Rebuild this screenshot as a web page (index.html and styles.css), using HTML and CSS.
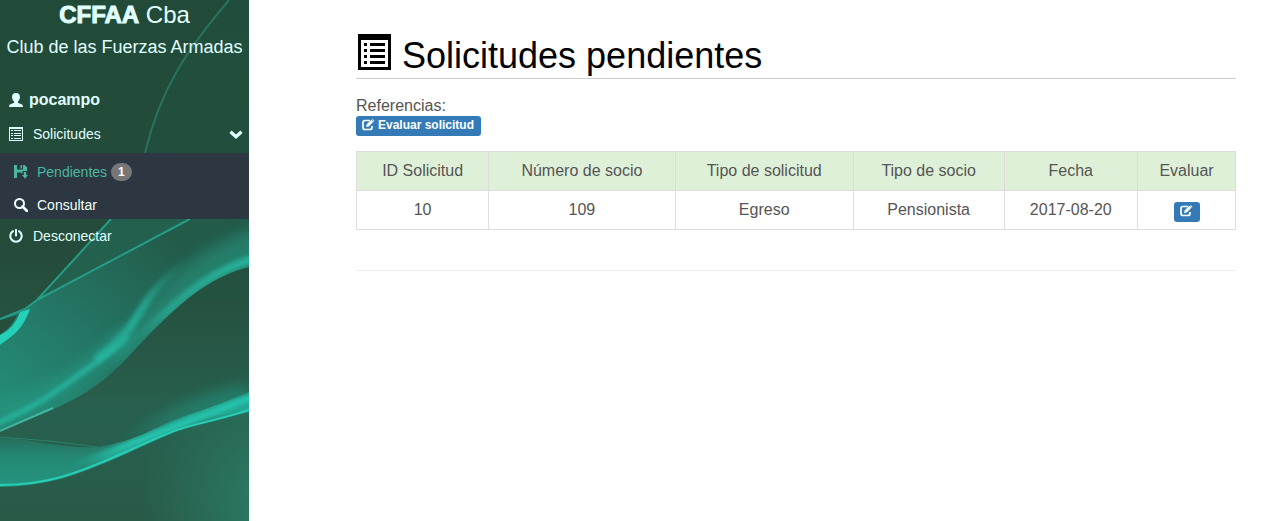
FILE: index.html
```html
<!DOCTYPE html>
<html lang="es">
<head>
<meta charset="utf-8">
<meta name="viewport" content="width=device-width, initial-scale=1">
<title>CFFAA Cba - Solicitudes pendientes</title>
<link rel="stylesheet" href="styles.css">
</head>
<body>
<svg class="symbols" aria-hidden="true">
  <symbol id="list" viewBox="0 0 14 14"><path fill-rule="evenodd" d="M0 0h14v14H0zM1 2v11h12V2z"/><path d="M2 3h2v1H2zM5 3h7v1H5zM2 6h2v1H2zM5 6h7v1H5zM2 8h2v1H2zM5 8h7v1H5zM2 11h2v1H2zM5 11h7v1H5z"/></symbol>
  <symbol id="list-large" viewBox="0 0 33 36"><path fill-rule="evenodd" d="M0 0h33v36H0zM3 6v27h27V6z"/><path d="M6 9h3v3H6zM12 9h15v3H12zM6 15h3v3H6zM12 15h15v3H12zM6 21h3v3H6zM12 21h15v3H12zM6 27h3v3H6zM12 27h15v3H12z"/></symbol>
  <symbol id="user" viewBox="0 0 14 14"><path d="M7 0C4.300 0 3 1.600 3.100 4c.1 2 .8 3.700 2 4.600v1C4.400 10.700 0 11 0 13.400V14h14v-.6c0-2.400-4.400-2.700-5.100-3.800v-1c1.200-.9 1.900-2.600 2-4.600C11 1.600 9.700 0 7 0z"/></symbol>
  <symbol id="save" viewBox="0 0 14 14"><path fill-rule="evenodd" d="M0 0h3v4.500h6V0h1.500L13 2.300V6H8.500v2.500H7.500V7.500H3V13H0zM6.500 0H8v3.500H6.500z"/><path d="M9.800 7h2.400v3H14l-3 3.800L8 10h1.800z"/></symbol>
  <symbol id="search" viewBox="0 0 14 14"><circle cx="5.500" cy="5.500" r="4.500" fill="none" stroke="currentColor" stroke-width="2"/><path d="m8.500 8.500 4.500 4.500" fill="none" stroke="currentColor" stroke-width="2.600" stroke-linecap="round"/></symbol>
  <symbol id="power" viewBox="0 0 14 14"><path d="M4 2.200a5.700 5.700 0 1 0 6 0M7 .8V6.500" fill="none" stroke="currentColor" stroke-width="2" stroke-linecap="round"/></symbol>
  <symbol id="chevron" viewBox="0 0 14 9"><path d="m1.500 1.800 5.500 5 5.500-5" fill="none" stroke="currentColor" stroke-width="3.200"/></symbol>
  <symbol id="edit" viewBox="0 0 13 12"><path d="M8 1.500H3Q1 1.500 1 3.500v5Q1 10.500 3 10.500h5Q10 10.500 10 8.500V7" fill="none" stroke="currentColor" stroke-width="1.700"/><path d="m4 8 .7-2.700L9.500.8l2 2-4.700 4.600zM10 .4l.6-.4 1.900 1.900-.6.500z"/></symbol>
</svg>
<div class="layout">
  <aside class="sidebar">
    <svg class="backdrop" viewBox="0 0 249 521" preserveAspectRatio="xMidYMin slice" aria-hidden="true">
      <defs>
        <linearGradient id="base" x1="0" y1="0" x2="0" y2="1"><stop offset="0" stop-color="#214a38"/><stop offset=".5" stop-color="#254c3a"/><stop offset=".8" stop-color="#28604f"/><stop offset="1" stop-color="#285a48"/></linearGradient>
        <radialGradient id="edge" gradientUnits="userSpaceOnUse" cx="270" cy="500" r="130"><stop offset="0" stop-color="#2a7d66"/><stop offset="1" stop-color="#2a7a63" stop-opacity="0"/></radialGradient>
        <linearGradient id="veil" gradientUnits="userSpaceOnUse" x1="0" y1="400" x2="160" y2="225"><stop offset="0" stop-color="#248c77"/><stop offset=".5" stop-color="#247362"/><stop offset="1" stop-color="#235b4a"/></linearGradient>
        <linearGradient id="wave" gradientUnits="userSpaceOnUse" x1="60" y1="0" x2="249" y2="0"><stop offset="0" stop-color="#24a08b" stop-opacity="0"/><stop offset=".3" stop-color="#25ae98"/><stop offset="1" stop-color="#24a995"/></linearGradient>
        <linearGradient id="streak" gradientUnits="userSpaceOnUse" x1="105" y1="350" x2="190" y2="262"><stop offset="0" stop-color="#27bba4"/><stop offset=".5" stop-color="#24a18c"/><stop offset="1" stop-color="#248570" stop-opacity="0"/></linearGradient>
        <linearGradient id="rim" gradientUnits="userSpaceOnUse" x1="130" y1="345" x2="249" y2="255"><stop offset="0" stop-color="#27a48f" stop-opacity="0"/><stop offset=".35" stop-color="#26a18b"/><stop offset="1" stop-color="#26b09a"/></linearGradient>
        <linearGradient id="crest" gradientUnits="userSpaceOnUse" x1="85" y1="0" x2="249" y2="0"><stop offset="0" stop-color="#26cfb7" stop-opacity="0"/><stop offset=".35" stop-color="#26cfb7"/><stop offset="1" stop-color="#26cfb7"/></linearGradient>
        <linearGradient id="lower" gradientUnits="userSpaceOnUse" x1="0" y1="436" x2="0" y2="487"><stop offset="0" stop-color="#276b59"/><stop offset=".4" stop-color="#248873"/><stop offset="1" stop-color="#249580"/></linearGradient>
        <filter id="soft" x="-30%" y="-30%" width="160%" height="160%"><feGaussianBlur stdDeviation="7"/></filter>
        <filter id="glow" x="-30%" y="-30%" width="160%" height="160%"><feGaussianBlur stdDeviation="2"/></filter>
        <clipPath id="ribbon"><path d="M0 319 25 309 37 300 190 219H249V267C196 280 159 325 126 359 87 400 55 408 0 431z"/></clipPath>
        <clipPath id="tail"><path d="M0 437C35 440 65 449 98 447 140 440 153 427 187 415Q225 403 249 391V412C215 422 197 423 177 431 135 449 101 467 61 479Q33 486 0 487z"/></clipPath>
      </defs>
      <path d="M0 0h249v521H0z" fill="url(#base)"/>
      <path d="M229 0C190 45 160 85 145 153L110 219 37 300H249V0z" fill="#235644" opacity=".35"/>
      <path d="M111 219 37 300 190 219z" fill="#24604e"/>
      <path d="M100 350h149v171H100z" fill="url(#edge)"/>
      <path d="M0 319 25 309 37 300 190 219H249V267C196 280 159 325 126 359 87 400 55 408 0 431z" fill="url(#veil)"/>
      <g clip-path="url(#ribbon)">
        <path d="M100 350C145 315 158 290 190 262Q220 238 270 225V275C196 280 159 325 126 365z" fill="#268c77" opacity=".7" filter="url(#soft)"/>
        <path d="M95 360C137 331 138 308 158 287Q170 272 200 252" fill="none" stroke="url(#streak)" stroke-width="8" filter="url(#glow)"/>
        <path d="M260 257C202 272 172 308 120 355" fill="none" stroke="url(#rim)" stroke-width="9" filter="url(#glow)"/>
        <path d="M-10 412C50 401 90 370 130 334" fill="none" stroke="#259883" stroke-width="20" opacity=".6" filter="url(#soft)"/>
        <path d="M-5 424C43 404 64 385 90 367Q112 352 128 336" fill="none" stroke="url(#streak)" stroke-width="4" filter="url(#glow)"/>
      </g>
      <path d="M0 431Q30 418 53 408" fill="none" stroke="#55d5be" stroke-width="2" opacity=".6"/>
      <path d="M0 320Q20 315 18 314 10 329 0 335z" fill="#264e3c"/>
      <path d="M0 335Q15 328 20 312L30 309C22 331 12 336 0 345z" fill="#25d0b8"/>
      <path d="M111 219 37 300 25 309 0 319M37 300 190 219" fill="none" stroke="#259c85" stroke-width="2"/>
      <path d="M229 0C188 48 160 89 145 153" fill="none" stroke="#28735d" stroke-width="2"/>
      <path d="M130 436C157 422 179 396 249 385V405C208 416 170 425 130 440z" fill="#238c77" opacity=".65" filter="url(#soft)"/>
      <path d="M0 437C35 440 65 449 98 447 140 440 153 427 187 415Q225 403 249 391V412C215 422 197 423 177 431 135 449 101 467 61 479Q33 486 0 487z" fill="url(#lower)"/>
      <g clip-path="url(#tail)">
        <path d="M65 465C125 449 165 415 260 390V412C197 418 166 432 110 462z" fill="url(#wave)" filter="url(#glow)"/>
        <path d="M85 458Q150 438 177 426L260 394" fill="none" stroke="url(#crest)" stroke-width="4" filter="url(#glow)"/>
      </g>
      <path d="M0 437Q50 440 98 447" fill="none" stroke="#27826d"/>
      <path d="M0 485Q33 485 61 477C101 466 137 445 177 430 197 423 215 421 249 410" fill="none" stroke="#27cdb5" stroke-width="2"/>
    </svg>
    <header class="brand">
      <div class="brand-name"><strong>CFFAA</strong> Cba</div>
      <div class="brand-club">Club de las Fuerzas Armadas</div>
    </header>
    <nav class="menu">
      <a class="item user" href="#"><svg class="icon"><use href="#user"/></svg><strong>pocampo</strong></a>
      <a class="item parent" href="#"><svg class="icon"><use href="#list"/></svg><span>Solicitudes</span><svg class="chevron"><use href="#chevron"/></svg></a>
      <div class="submenu">
        <a class="item active" href="#"><svg class="icon"><use href="#save"/></svg><span>Pendientes</span><span class="badge">1</span></a>
        <a class="item" href="#"><svg class="icon"><use href="#search"/></svg><span>Consultar</span></a>
      </div>
      <a class="item" href="#"><svg class="icon"><use href="#power"/></svg><span>Desconectar</span></a>
    </nav>
  </aside>
  <main class="content">
    <h1 class="title"><svg class="title-icon" aria-hidden="true"><use href="#list-large"/></svg>Solicitudes pendientes</h1>
    <div class="legend">
      <div>Referencias:</div>
      <button class="button" type="button"><svg class="edit" aria-hidden="true"><use href="#edit"/></svg>Evaluar solicitud</button>
    </div>
    <table class="table">
      <thead><tr><th>ID Solicitud</th><th>Número de socio</th><th>Tipo de solicitud</th><th>Tipo de socio</th><th>Fecha</th><th class="action-head">Evaluar</th></tr></thead>
      <tbody><tr><td>10</td><td>109</td><td>Egreso</td><td>Pensionista</td><td>2017-08-20</td><td class="action"><button class="button" type="button" aria-label="Evaluar"><svg class="edit" aria-hidden="true"><use href="#edit"/></svg></button></td></tr></tbody>
    </table>
    <hr class="divider">
  </main>
</div>
</body>
</html>
```
FILE: styles.css
```css
* { box-sizing: border-box; }
body {
  margin: 0;
  font: 16px/22px "Liberation Sans", Arial, sans-serif;
  color: #555;
  background: #fff;
}
.symbols { position: absolute; width: 0; height: 0; }
svg { fill: currentColor; flex: none; }
.layout { display: flex; min-height: 100vh; }
.sidebar {
  position: relative;
  isolation: isolate;
  flex: 0 0 249px;
  overflow: hidden;
  color: #e0ffff;
  background: #285a48;
}
.backdrop { position: absolute; inset: 0; width: 100%; height: 100%; z-index: -1; }
.brand { text-align: center; white-space: nowrap; }
.brand-name { font-size: 24px; line-height: 30px; }
.brand-name strong { -webkit-text-stroke: 1px currentColor; }
.brand-club { font-size: 18px; line-height: 34px; }
.menu { padding-top: 18px; font-size: 14px; }
.item {
  display: flex;
  align-items: center;
  gap: 10px;
  height: 34px;
  padding: 0 6px 0 9px;
  color: inherit;
  text-decoration: none;
}
.icon { width: 14px; height: 14px; }
.user { gap: 6px; height: 35px; }
.user strong { font-size: 16px; }
.parent { height: 36px; padding-bottom: 2px; }
.chevron { width: 14px; height: 9px; margin-left: auto; }
.submenu { background: #2c3742; padding-top: 1px; }
.submenu .item { height: 29px; padding-left: 14px; gap: 9px; color: #f0ffff; }
.submenu .active { height: 36px; color: #48b99a; }
.active .badge { margin-left: -5px; }
.badge {
  padding: 3px 7px;
  border-radius: 10px;
  color: #fff;
  background: #777;
  font-size: 12px;
  font-weight: 700;
  line-height: 12px;
}
.content { flex: 1; min-width: 0; padding: 33px 38px 20px 107px; }
.title {
  display: flex;
  align-items: center;
  gap: 11px;
  margin: 0 0 16px;
  padding-left: 2px;
  height: 46px;
  border-bottom: 1px solid #ccc;
  color: #000;
  font-size: 36px;
  font-weight: 400;
  line-height: 46px;
}
.title-icon { width: 33px; height: 36px; margin-bottom: 8px; }
.legend { display: flex; flex-direction: column; align-items: flex-start; margin-bottom: 15px; line-height: 21px; }
.button {
  display: inline-flex;
  align-items: center;
  gap: 3px;
  height: 20px;
  padding: 0 7px 2px 6px;
  border: 0;
  border-radius: 3px;
  background: #337ab7;
  color: #fff;
  font: 700 12px/18px "Liberation Sans", Arial, sans-serif;
}
.edit { width: 13px; height: 12px; }
.table { width: 100%; border-collapse: collapse; text-align: center; }
.table th, .table td { padding: 8px; border: 1px solid #ddd; font-weight: 400; }
.table th { background: #dff0d8; }
.table .action-head { width: 98px; }
.table .action { padding: 3px 8px 0; }
.action .button { vertical-align: middle; }
.divider { margin: 40px 0 20px; border: 0; border-top: 1px solid #eee; }
```
